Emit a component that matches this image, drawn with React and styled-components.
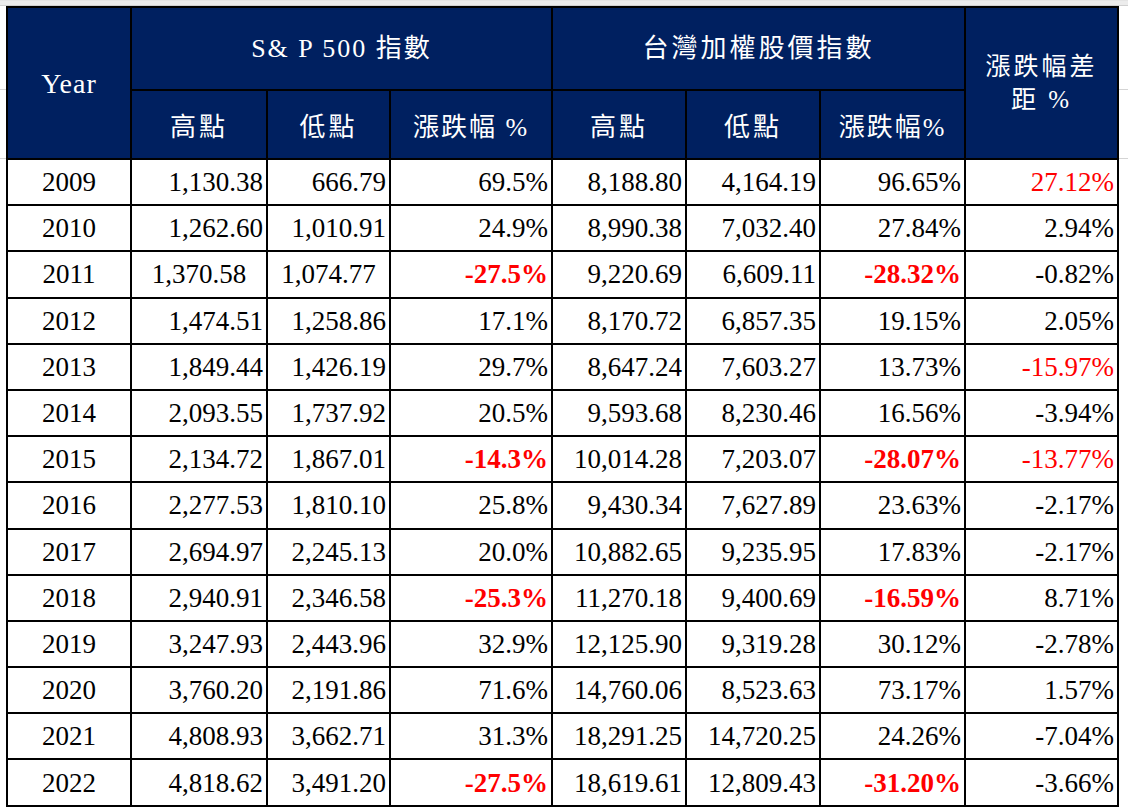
import React from 'react';
import styled, { createGlobalStyle } from 'styled-components';

const GlobalStyle = createGlobalStyle`
  html, body {
    margin: 0;
    padding: 0;
    background: #ffffff;
  }
`;

const rows = [
  ['2009', '1,130.38', '666.79', '69.5%', '8,188.80', '4,164.19', '96.65%', '27.12%', { diff: true }],
  ['2010', '1,262.60', '1,010.91', '24.9%', '8,990.38', '7,032.40', '27.84%', '2.94%', {}],
  ['2011', '1,370.58', '1,074.77', '-27.5%', '9,220.69', '6,609.11', '-28.32%', '-0.82%', { down: true, center: true }],
  ['2012', '1,474.51', '1,258.86', '17.1%', '8,170.72', '6,857.35', '19.15%', '2.05%', {}],
  ['2013', '1,849.44', '1,426.19', '29.7%', '8,647.24', '7,603.27', '13.73%', '-15.97%', { diff: true }],
  ['2014', '2,093.55', '1,737.92', '20.5%', '9,593.68', '8,230.46', '16.56%', '-3.94%', {}],
  ['2015', '2,134.72', '1,867.01', '-14.3%', '10,014.28', '7,203.07', '-28.07%', '-13.77%', { down: true, diff: true }],
  ['2016', '2,277.53', '1,810.10', '25.8%', '9,430.34', '7,627.89', '23.63%', '-2.17%', {}],
  ['2017', '2,694.97', '2,245.13', '20.0%', '10,882.65', '9,235.95', '17.83%', '-2.17%', {}],
  ['2018', '2,940.91', '2,346.58', '-25.3%', '11,270.18', '9,400.69', '-16.59%', '8.71%', { down: true }],
  ['2019', '3,247.93', '2,443.96', '32.9%', '12,125.90', '9,319.28', '30.12%', '-2.78%', {}],
  ['2020', '3,760.20', '2,191.86', '71.6%', '14,760.06', '8,523.63', '73.17%', '1.57%', {}],
  ['2021', '4,808.93', '3,662.71', '31.3%', '18,291.25', '14,720.25', '24.26%', '-7.04%', {}],
  ['2022', '4,818.62', '3,491.20', '-27.5%', '18,619.61', '12,809.43', '-31.20%', '-3.66%', { down: true }],
];

const colWidths = [124, 136, 123, 162, 134, 134, 145, 153];

const Sheet = styled.div`
  width: 1128px;
  height: 812px;
  box-sizing: border-box;
  padding: 5px 0 0 6px;
  border-top: 1px solid #e4e4e4;
  background-color: #ffffff;
  background-image:
    linear-gradient(#ececec, #ececec),
    linear-gradient(#d0d0d0, #d0d0d0),
    linear-gradient(#d4d4d4, #d4d4d4),
    linear-gradient(#d4d4d4, #d4d4d4);
  background-size: 100% 4px, 100% 1px, 100% 1px, 100% 1px;
  background-position: 0 0, 0 4px, 0 88px, 0 157px;
  background-repeat: no-repeat;
  overflow: hidden;
`;

const Table = styled.table`
  border-collapse: collapse;
  table-layout: fixed;
  width: 1111px;
  font-family: 'Liberation Serif', 'Noto Sans CJK TC', serif;
  color: #000000;
`;

const HeadCell = styled.th`
  background: #002060;
  color: #ffffff;
  border: 2px solid #000000;
  font-weight: 400;
  font-size: ${(p) => (p.$small ? 25 : 26)}px;
  letter-spacing: ${(p) => (p.$wide ? 3 : 2)}px;
  line-height: 33px;
  text-align: center;
  vertical-align: middle;
  padding: ${(p) => (p.$sub ? '6px 0 0' : '0')};
  font-family: 'Liberation Serif', 'Noto Sans CJK TC', serif;
`;

const YearHead = styled(HeadCell)`
  font-size: 28px;
  letter-spacing: 1px;
`;

const TopRow = styled.tr`
  height: 83px;
`;

const SubRow = styled.tr`
  height: 69px;
`;

const DataRow = styled.tr`
  height: 46.2px;
`;

const Cell = styled.td`
  border: 2px solid #000000;
  font-size: 27px;
  padding: 0 ${(p) => (p.$align === 'right' ? 3 : 0)}px 0 0;
  text-align: ${(p) => p.$align || 'right'};
  vertical-align: middle;
  white-space: nowrap;
  color: ${(p) => (p.$red ? '#ff0000' : '#000000')};
  font-weight: ${(p) => (p.$bold ? 700 : 400)};
  line-height: 30px;
`;

export default function App() {
  return (
    <>
      <GlobalStyle />
      <Sheet>
        <Table>
          <colgroup>
            {colWidths.map((w, i) => (
              <col key={i} style={{ width: w }} />
            ))}
          </colgroup>
          <thead>
            <TopRow>
              <YearHead rowSpan={2}>Year</YearHead>
              <HeadCell colSpan={3}>S&amp; P 500 指數</HeadCell>
              <HeadCell colSpan={3} $wide>台灣加權股價指數</HeadCell>
              <HeadCell rowSpan={2} $small $wide>
                漲跌幅差
                <br />
                距 %
              </HeadCell>
            </TopRow>
            <SubRow>
              <HeadCell $sub $wide>高點</HeadCell>
              <HeadCell $sub $wide>低點</HeadCell>
              <HeadCell $sub>漲跌幅 %</HeadCell>
              <HeadCell $sub $wide>高點</HeadCell>
              <HeadCell $sub $wide>低點</HeadCell>
              <HeadCell $sub>漲跌幅%</HeadCell>
            </SubRow>
          </thead>
          <tbody>
            {rows.map((r) => {
              const f = r[8];
              return (
                <DataRow key={r[0]}>
                  <Cell $align="center">{r[0]}</Cell>
                  <Cell $align={f.center ? 'center' : 'right'}>{r[1]}</Cell>
                  <Cell $align={f.center ? 'center' : 'right'}>{r[2]}</Cell>
                  <Cell $align="right" $red={f.down} $bold={f.down}>{r[3]}</Cell>
                  <Cell $align="right">{r[4]}</Cell>
                  <Cell $align="right">{r[5]}</Cell>
                  <Cell $align="right" $red={f.down} $bold={f.down}>{r[6]}</Cell>
                  <Cell $align="right" $red={f.diff}>{r[7]}</Cell>
                </DataRow>
              );
            })}
          </tbody>
        </Table>
      </Sheet>
    </>
  );
}
